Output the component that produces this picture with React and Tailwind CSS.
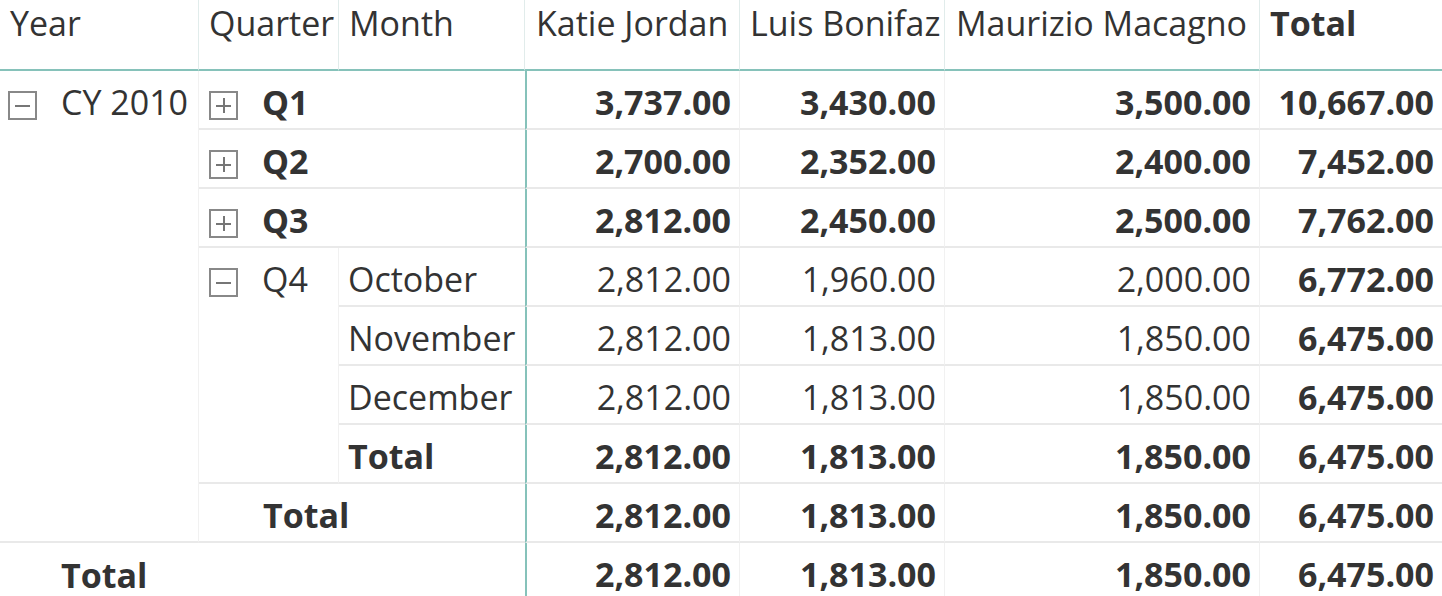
import React from "react";

const Box = ({ minus }) => (
  <span className="relative inline-block w-[29px] h-[29px] border-2 border-[#888888] shrink-0 mt-[6px]">
    <span className="absolute left-[5px] right-[5px] top-[11.5px] h-[2px] bg-[#767676]" />
    {!minus && (
      <span className="absolute top-[5px] bottom-[5px] left-[11.5px] w-[2px] bg-[#767676]" />
    )}
  </span>
);

const V = ({ children, bold, first, last, row }) => (
  <div
    className={
      "flex items-center justify-end pr-[8px] pt-[6px] border-b-2 border-[#e9e9e9] " +
      (first ? "border-l-2 border-l-[#86c2ba] " : "") +
      (last ? "" : "border-r border-r-[#f1f1f1] ") +
      (bold ? "font-bold" : "")
    }
    style={{ gridRow: row }}
  >
    {children}
  </div>
);

const rows = [
  { r: 2, v: ["3,737.00", "3,430.00", "3,500.00", "10,667.00"], b: true },
  { r: 3, v: ["2,700.00", "2,352.00", "2,400.00", "7,452.00"], b: true },
  { r: 4, v: ["2,812.00", "2,450.00", "2,500.00", "7,762.00"], b: true },
  { r: 5, v: ["2,812.00", "1,960.00", "2,000.00", "6,772.00"], b: false },
  { r: 6, v: ["2,812.00", "1,813.00", "1,850.00", "6,475.00"], b: false },
  { r: 7, v: ["2,812.00", "1,813.00", "1,850.00", "6,475.00"], b: false },
  { r: 8, v: ["2,812.00", "1,813.00", "1,850.00", "6,475.00"], b: true },
  { r: 9, v: ["2,812.00", "1,813.00", "1,850.00", "6,475.00"], b: true },
  { r: 10, v: ["2,812.00", "1,813.00", "1,850.00", "6,475.00"], b: true },
];

export default function App() {
  const hdr =
    "flex items-start pl-[10px] leading-[46px] border-b-2 border-[#86c2ba] border-r border-r-[#e1eceb] whitespace-nowrap";
  return (
    <div
      className="w-[1442px] bg-white text-[#333333] text-[34px] overflow-hidden"
      style={{ fontFamily: '"Open Sans", "Noto Sans", sans-serif' }}
    >
      <div className="grid grid-cols-[199px_140px_186px_215px_205px_315px_182px] grid-rows-[71px_repeat(9,59px)]">
        {/* header */}
        <div className={hdr + " pl-[6px]"}>Year</div>
        <div className={hdr + " pl-[8px]"}>Quarter</div>
        <div className={hdr}>Month</div>
        <div className={hdr + " pl-[11px]"}>Katie Jordan</div>
        <div className={hdr + " pl-[10px]"}>Luis Bonifaz</div>
        <div className={hdr + " pl-[11px]"}>Maurizio Macagno</div>
        <div className={hdr + " font-bold border-r-0"}>Total</div>

        {/* Year */}
        <div className="col-start-1 row-start-2 row-span-8 border-b-2 border-[#e9e9e9] border-r border-r-[#f1f1f1] flex items-start h-full">
          <div className="h-[57px] flex items-center pt-[6px] pl-[8px] gap-[24px] whitespace-nowrap">
            <Box minus />
            <span>CY 2010</span>
          </div>
        </div>

        {/* Q1-Q3 */}
        {["Q1", "Q2", "Q3"].map((q, i) => (
          <div
            key={q}
            className="col-start-2 col-span-2 flex items-center pt-[6px] pl-[10px] gap-[24px] border-b-2 border-[#e9e9e9] font-bold"
            style={{ gridRow: i + 2 }}
          >
            <Box />
            <span>{q}</span>
          </div>
        ))}

        {/* Q4 */}
        <div className="col-start-2 row-start-5 row-span-4 border-b-2 border-[#e9e9e9] border-r border-r-[#f1f1f1]">
          <div className="h-[57px] flex items-center pt-[6px] pl-[10px] gap-[24px]">
            <Box minus />
            <span>Q4</span>
          </div>
        </div>
        {["October", "November", "December"].map((m, i) => (
          <div
            key={m}
            className="col-start-3 flex items-center pt-[6px] pl-[9px] border-b-2 border-[#e9e9e9] whitespace-nowrap"
            style={{ gridRow: i + 5 }}
          >
            {m}
          </div>
        ))}
        <div className="col-start-3 row-start-8 flex items-center pt-[6px] pl-[9px] border-b-2 border-[#e9e9e9] font-bold">
          Total
        </div>

        {/* CY total */}
        <div className="col-start-2 col-span-2 row-start-9 flex items-center pt-[6px] pl-[64px] border-b-2 border-[#e9e9e9] font-bold">
          Total
        </div>

        {/* Grand total */}
        <div className="col-start-1 col-span-3 row-start-10 flex items-center pt-[6px] pl-[61px] font-bold">
          Total
        </div>

        {/* values */}
        {rows.map((row) => (
          <React.Fragment key={row.r}>
            <V row={row.r} first bold={row.b}>{row.v[0]}</V>
            <V row={row.r} bold={row.b}>{row.v[1]}</V>
            <V row={row.r} bold={row.b}>{row.v[2]}</V>
            <V row={row.r} last bold>{row.v[3]}</V>
          </React.Fragment>
        ))}
      </div>
    </div>
  );
}
